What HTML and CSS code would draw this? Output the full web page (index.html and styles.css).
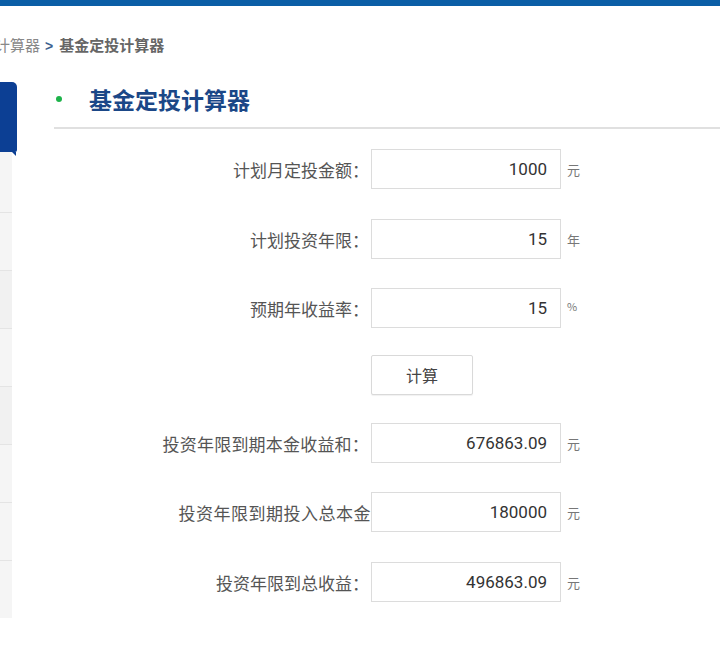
FILE: index.html
```html
<!DOCTYPE html>
<html lang="zh-CN">
<head>
<meta charset="utf-8">
<title>基金定投计算器</title>
<link rel="stylesheet" href="styles.css">
</head>
<body>
<div class="topbar"></div>
<div class="breadcrumb"><span class="crumb">计算器</span><span class="sep">&gt;</span><span class="current">基金定投计算器</span></div>
<div class="layout">
  <aside class="sidebar">
    <div class="side-tab"></div>
    <div class="side-list">
      <div class="side-item first"></div>
      <div class="side-item"></div>
      <div class="side-item dark"></div>
      <div class="side-item"></div>
      <div class="side-item dark"></div>
      <div class="side-item"></div>
      <div class="side-item"></div>
      <div class="side-item last"></div>
    </div>
  </aside>
  <main class="main">
    <div class="title-bar">
      <span class="dot"></span>
      <h1 class="title">基金定投计算器</h1>
    </div>
    <form class="form">
      <div class="row">
        <label class="label">计划月定投金额：</label>
        <input class="field" type="text" value="1000">
        <span class="unit">元</span>
      </div>
      <div class="row push">
        <label class="label">计划投资年限：</label>
        <input class="field" type="text" value="15">
        <span class="unit">年</span>
      </div>
      <div class="row">
        <label class="label">预期年收益率：</label>
        <input class="field" type="text" value="15">
        <span class="unit pct">%</span>
      </div>
      <div class="row btn-row">
        <button class="btn" type="button">计算</button>
      </div>
      <div class="row pull">
        <label class="label wide1">投资年限到期本金收益和：</label>
        <input class="field" type="text" value="676863.09">
        <span class="unit">元</span>
      </div>
      <div class="row">
        <label class="label wide2">投资年限到期投入总本金</label>
        <input class="field" type="text" value="180000">
        <span class="unit">元</span>
      </div>
      <div class="row push">
        <label class="label">投资年限到总收益：</label>
        <input class="field" type="text" value="496863.09">
        <span class="unit">元</span>
      </div>
    </form>
  </main>
</div>
</body>
</html>
```

FILE: styles.css
```css
html, body {
  margin: 0;
  padding: 0;
  background: #fff;
  overflow-x: hidden;
}
body {
  font-family: "Noto Sans CJK SC", "Noto Sans", sans-serif;
  color: #555;
}
.topbar {
  height: 6px;
  background: #0b5ea6;
}
.breadcrumb {
  margin: 29px 0 0 -5px;
  height: 20px;
  line-height: 20px;
  font-size: 15px;
  white-space: nowrap;
  color: #777;
}
.crumb {
  color: #888;
}
.sep {
  color: #3d5f8f;
  font-weight: 700;
  font-family: "Liberation Sans", sans-serif;
  font-size: 14px;
  margin: 0 6px 0 5px;
}
.current {
  color: #666;
  font-weight: 700;
}
.layout {
  display: flex;
  margin-top: 27px;
}
.sidebar {
  width: 17px;
  flex: none;
}
.side-tab {
  position: relative;
  height: 70px;
  background: #0c3f94;
  border-top-right-radius: 5px;
  border-bottom-right-radius: 2px;
}
.side-tab::after {
  content: "";
  position: absolute;
  right: 1px;
  bottom: -4px;
  border-top: 4px solid #0c3f94;
  border-left: 4px solid transparent;
}
.side-list {
  width: 12px;
  background: #f5f5f5;
}
.side-item {
  height: 57px;
  border-bottom: 1px solid #e4e4e4;
}
.side-item.first {
  height: 60px;
}
.side-item.dark {
  background: #f1f1f1;
}
.side-item.last {
  border-bottom: none;
}
.main {
  flex: 1;
  margin-left: 37px;
}
.title-bar {
  display: flex;
  align-items: center;
  height: 47px;
  box-sizing: border-box;
  padding-bottom: 12px;
  border-bottom: 2px solid #e0e0e0;
}
.dot {
  width: 6px;
  height: 6px;
  border-radius: 50%;
  background: #1db34a;
  margin-left: 2px;
}
.title {
  margin: 0 0 0 27px;
  font-size: 23px;
  line-height: 30px;
  font-weight: 700;
  color: #1b4787;
}
.form {
  display: flex;
  flex-direction: column;
  gap: 29px;
  padding-top: 20px;
}
.row {
  display: flex;
  align-items: center;
  height: 40px;
}
.row.push {
  margin-top: 1px;
}
.row.pull {
  margin-top: -1px;
}
.label {
  width: 315px;
  flex: none;
  text-align: right;
  font-size: 17px;
  color: #555;
  white-space: nowrap;
}
.label.wide1 {
  letter-spacing: 0.2px;
}
.label.wide2 {
  letter-spacing: 0.5px;
  width: 317px;
  margin-right: -2px;
}
.field {
  box-sizing: border-box;
  width: 190px;
  height: 40px;
  margin: 0 0 0 2px;
  border: 1px solid #dcdcdc;
  border-radius: 0;
  padding: 0 13px 0 8px;
  text-align: right;
  font-family: Roboto, "Liberation Sans", sans-serif;
  font-size: 17px;
  color: #333;
  background: #fff;
  outline: none;
}
.unit {
  margin-left: 6px;
  font-size: 13px;
  color: #777;
}
.unit.pct {
  font-size: 11px;
  margin-top: -4px;
}
.btn-row {
  padding-left: 317px;
  margin-top: -2px;
}
.btn {
  width: 102px;
  height: 40px;
  border: 1px solid #d9d9d9;
  border-radius: 2px;
  background: #fff;
  box-shadow: 0 1px 1px rgba(0,0,0,0.06);
  font-family: "Noto Sans CJK SC", sans-serif;
  font-size: 16px;
  color: #444;
  padding: 0;
}
```
